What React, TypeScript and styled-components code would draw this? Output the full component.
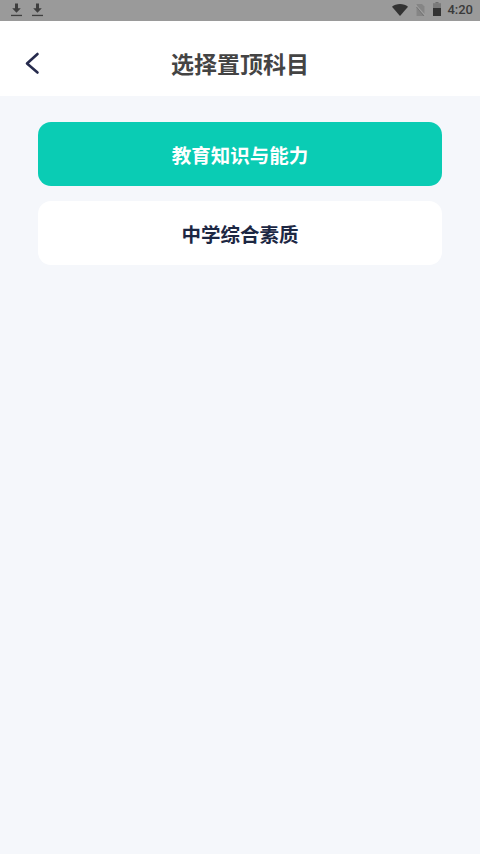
import React from "react";
import styled, { createGlobalStyle } from "styled-components";

const Global = createGlobalStyle`
  html, body { margin: 0; padding: 0; height: 100%; }
  body { font-family: "Roboto", "Noto Sans CJK SC", sans-serif; background: #f5f7fb; }
`;

const Page = styled.div`
  width: 480px;
  height: 854px;
  overflow: hidden;
  background: #f5f7fb;
  display: flex;
  flex-direction: column;
`;

const StatusBar = styled.div`
  height: 21px;
  flex: none;
  box-sizing: border-box;
  background: #9a9a9a;
  display: flex;
  align-items: center;
  justify-content: space-between;
  padding: 0 7px 1px 11px;
`;

const StatusGroup = styled.div<{ $gap: number }>`
  display: flex;
  align-items: center;
  gap: ${(p) => p.$gap}px;
`;

const Clock = styled.span`
  font-family: "Roboto", sans-serif;
  font-size: 13px;
  font-weight: 500;
  color: #3a3a3a;
  line-height: 20px;
`;

const Header = styled.header`
  height: 75px;
  flex: none;
  background: #ffffff;
  position: relative;
  display: flex;
  align-items: center;
  justify-content: center;
`;

const BackButton = styled.button`
  position: absolute;
  left: 24px;
  top: 30px;
  width: 17px;
  height: 24px;
  padding: 0;
  border: 0;
  background: none;
  display: block;
`;

const Title = styled.h1`
  margin: 0;
  padding-top: 9px;
  font-family: "Noto Sans CJK SC", sans-serif;
  font-size: 23px;
  font-weight: 700;
  line-height: 32px;
  color: #444444;
`;

const List = styled.main`
  display: flex;
  flex-direction: column;
  gap: 15px;
  padding: 26px 38px 0;
`;

const Subject = styled.button<{ $active?: boolean }>`
  height: 64px;
  border: 0;
  border-radius: 13px;
  padding: 1px 0 0;
  background: ${(p) => (p.$active ? "#0accb4" : "#ffffff")};
  color: ${(p) => (p.$active ? "#ffffff" : "#1c2743")};
  font-family: "Noto Sans CJK SC", sans-serif;
  font-size: 19.5px;
  font-weight: 700;
  line-height: 28px;
`;

const BatterySvg = styled.svg`
  margin: -2px -1px 0 0;
`;

const DownloadIcon = () => (
  <svg width="11" height="14" viewBox="0 0 11 14">
    <path d="M4 0.500h3v4.800h2.800L5.500 9.800 1.200 5.300H4z" fill="#3f3f3f" />
    <rect x="0" y="11.800" width="11" height="1.300" fill="#3f3f3f" />
  </svg>
);

const WifiIcon = () => (
  <svg width="16" height="12" viewBox="0 0 16 12">
    <path d="M0 2.800C2 1 4.900 0 8 0s6 1 8 2.800L8 12z" fill="#333333" />
  </svg>
);

const SimIcon = () => (
  <svg width="11" height="12" viewBox="0 0 11 12">
    <path d="M1.500 0h5.500L9.500 2.500V12H1.500z" fill="#858585" />
    <path d="M0.500 0.800L10.500 11.800" stroke="#a0a0a0" strokeWidth="1.200" />
    <path d="M1.500 3L8.800 12" stroke="#707070" strokeWidth="0.800" />
  </svg>
);

const BatteryIcon = () => (
  <BatterySvg width="8" height="14" viewBox="0 0 8 14">
    <rect x="2.500" y="0" width="3" height="1.500" fill="#6f6f6f" />
    <rect x="0" y="1.200" width="8" height="4.800" fill="#7a7a7a" />
    <rect x="0" y="6" width="8" height="8" fill="#333333" />
  </BatterySvg>
);

const BackIcon = () => (
  <svg width="17" height="24" viewBox="0 0 17 24">
    <path
      d="M13.500 3L3 12.500 13.500 21.500"
      fill="none"
      stroke="#262b4d"
      strokeWidth="2.600"
      strokeLinecap="round"
      strokeLinejoin="round"
    />
  </svg>
);

export default function App() {
  return (
    <Page>
      <Global />
      <StatusBar>
        <StatusGroup $gap={10}>
          <DownloadIcon />
          <DownloadIcon />
        </StatusGroup>
        <StatusGroup $gap={7}>
          <WifiIcon />
          <SimIcon />
          <BatteryIcon />
          <Clock>4:20</Clock>
        </StatusGroup>
      </StatusBar>
      <Header>
        <BackButton aria-label="返回">
          <BackIcon />
        </BackButton>
        <Title>选择置顶科目</Title>
      </Header>
      <List>
        <Subject $active>教育知识与能力</Subject>
        <Subject>中学综合素质</Subject>
      </List>
    </Page>
  );
}
